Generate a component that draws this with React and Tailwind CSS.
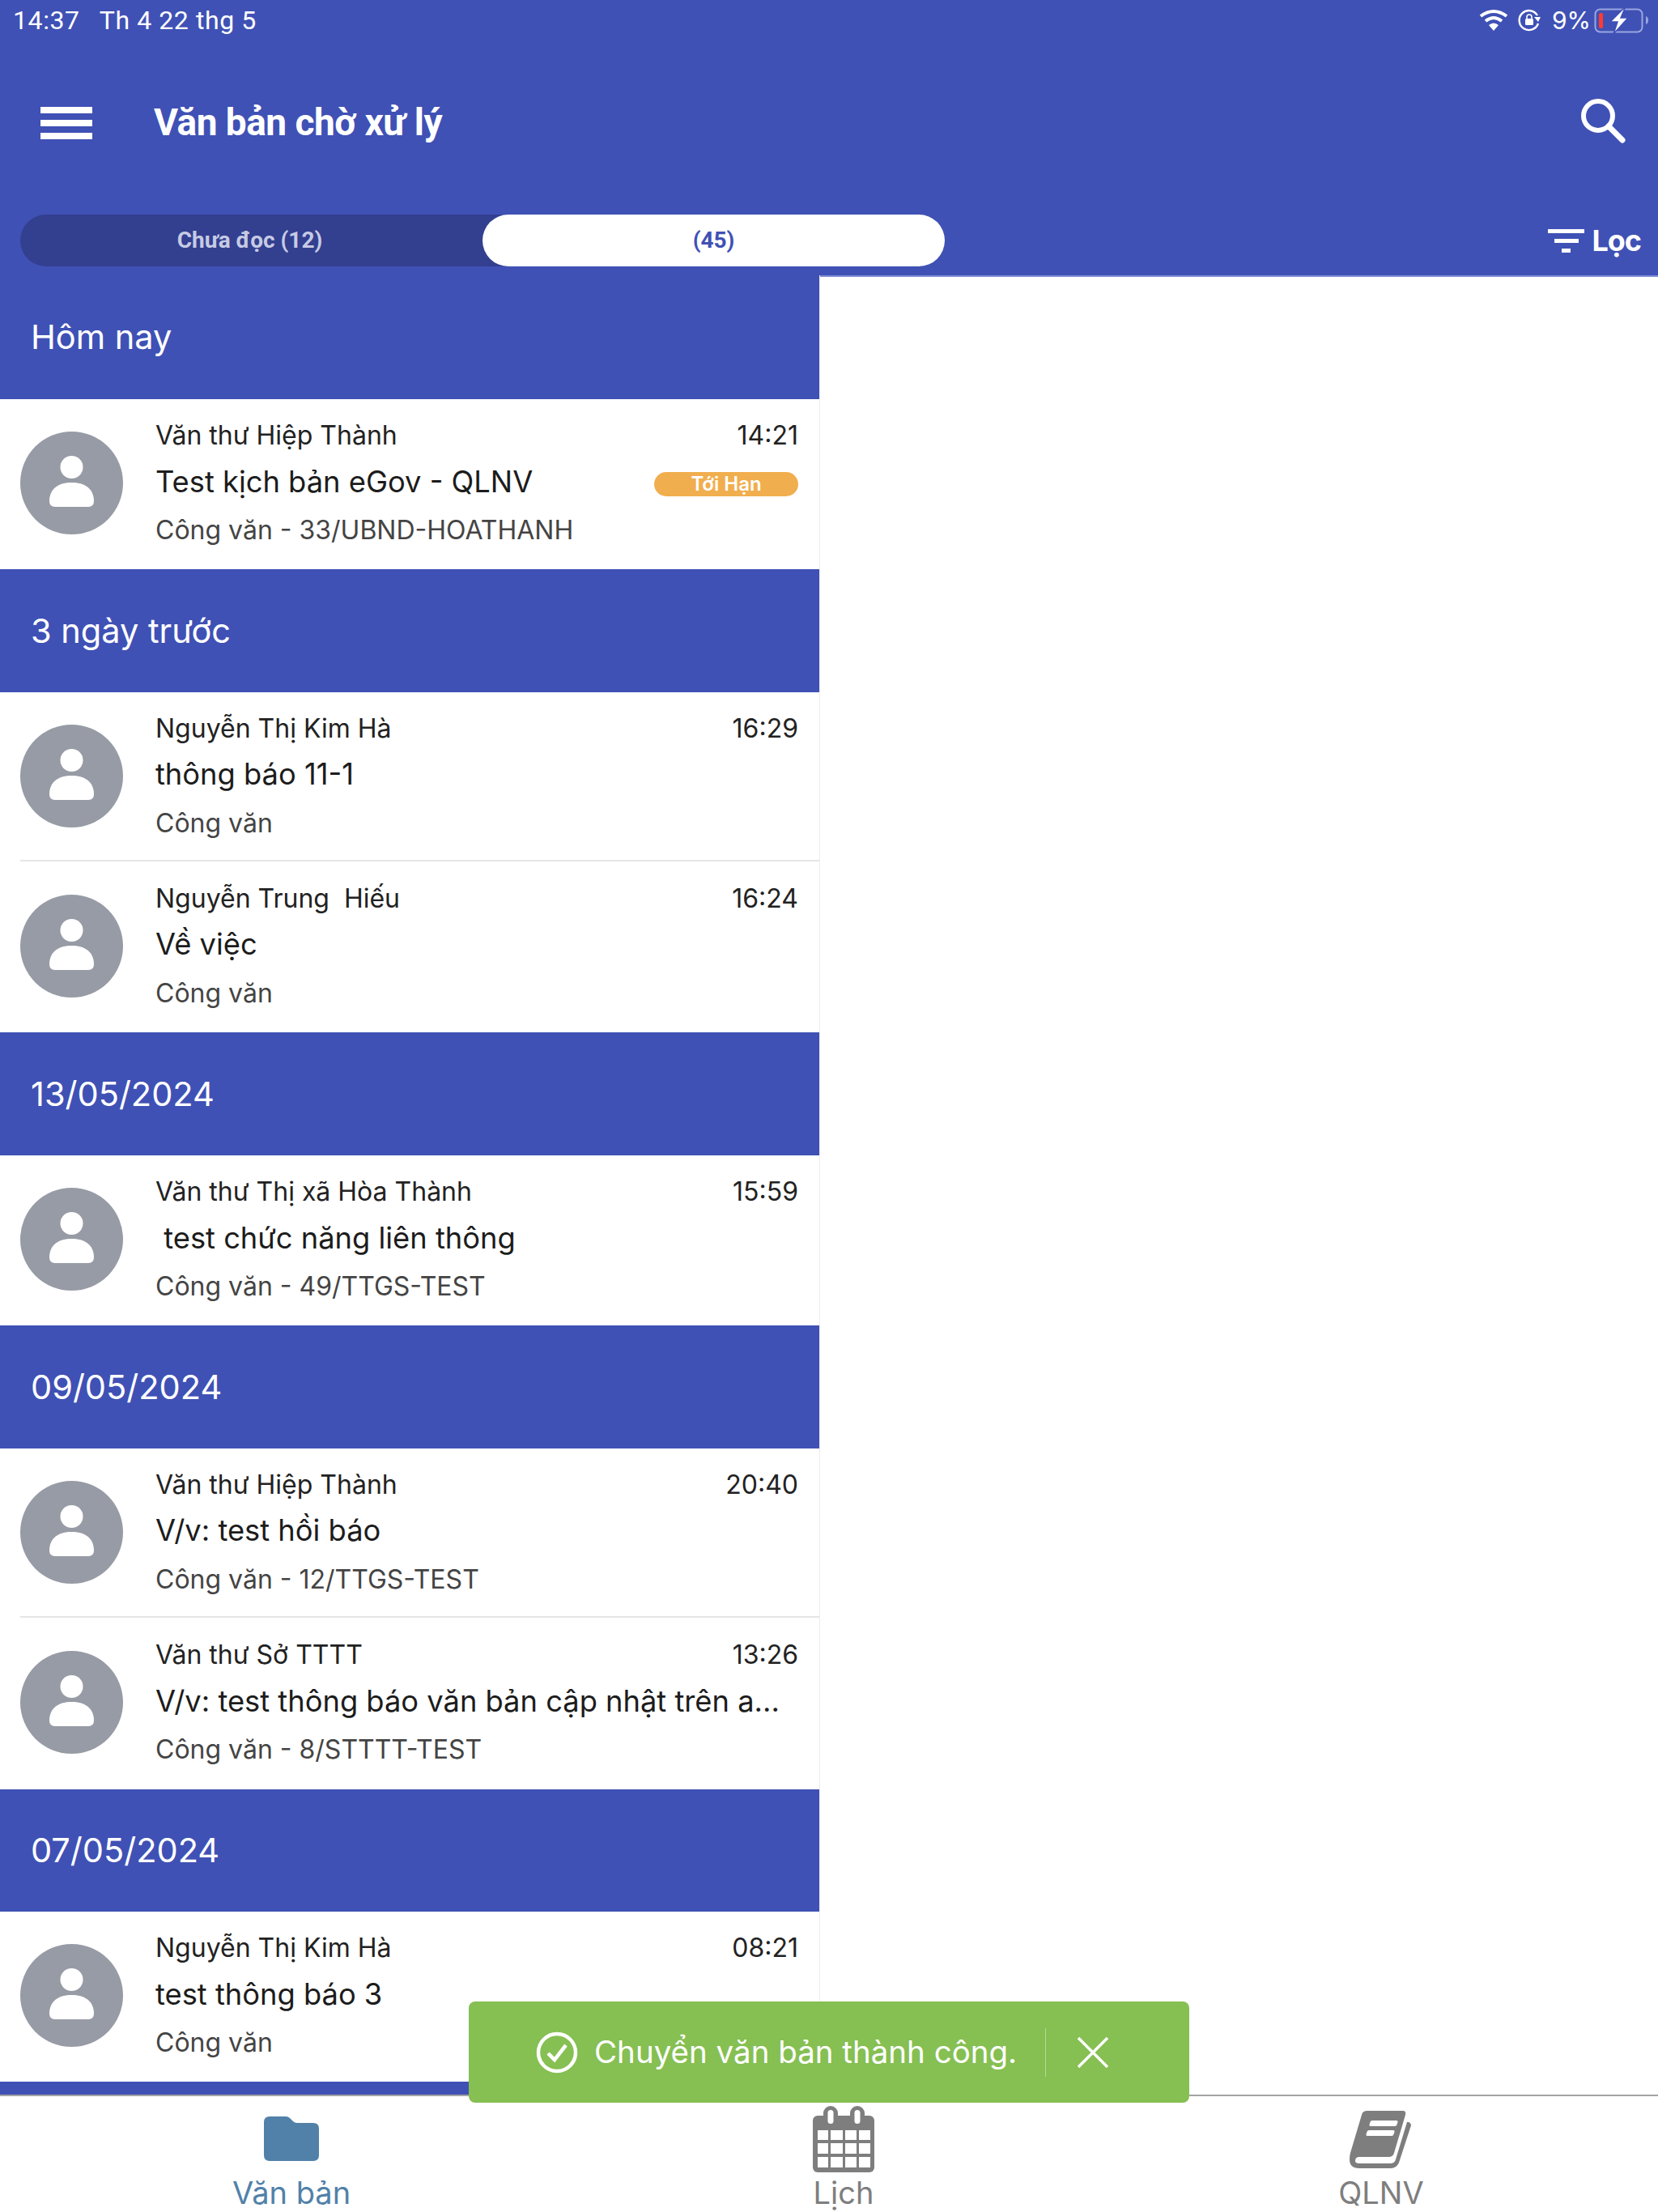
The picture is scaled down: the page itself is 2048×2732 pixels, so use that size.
const groups = [
  { title: "Hôm nay", h: "h-[153px]", items: [
    { name: "Văn thư Hiệp Thành", time: "14:21", title: "Test kịch bản eGov - QLNV", sub: "Công văn - 33/UBND-HOATHANH", badge: true, h: "h-[210px]" },
  ]},
  { title: "3 ngày trước", h: "h-[152px]", items: [
    { name: "Nguyễn Thị Kim Hà", time: "16:29", title: "thông báo 11-1", sub: "Công văn", h: "h-[209px]", line: true },
    { name: "Nguyễn Trung  Hiếu", time: "16:24", title: "Về việc", sub: "Công văn", h: "h-[211px]" },
  ]},
  { title: "13/05/2024", h: "h-[152px]", items: [
    { name: "Văn thư Thị xã Hòa Thành", time: "15:59", title: " test chức năng liên thông", sub: "Công văn - 49/TTGS-TEST", h: "h-[210px]" },
  ]},
  { title: "09/05/2024", h: "h-[152px]", items: [
    { name: "Văn thư Hiệp Thành", time: "20:40", title: "V/v: test hồi báo", sub: "Công văn - 12/TTGS-TEST", h: "h-[209px]", line: true },
    { name: "Văn thư Sở TTTT", time: "13:26", title: "V/v: test thông báo văn bản cập nhật trên a...", sub: "Công văn - 8/STTTT-TEST", h: "h-[212px]" },
  ]},
  { title: "07/05/2024", h: "h-[151px]", items: [
    { name: "Nguyễn Thị Kim Hà", time: "08:21", title: "test thông báo 3", sub: "Công văn", h: "h-[210px]" },
  ]},
];

function Avatar() {
  return (
    <svg width="127" height="127" viewBox="0 0 127 127" className="shrink-0 mt-[-3px]">
      <circle cx="63.5" cy="63.5" r="63.5" fill="#979ba5" />
      <circle cx="63.5" cy="44" r="14" fill="#fff" />
      <path d="M36 86 C36 70 48 63 63.5 63 C79 63 91 70 91 86 Q91 93 84 93 L43 93 Q36 93 36 86 Z" fill="#fff" />
    </svg>
  );
}

function Row({ it }) {
  return (
    <div className={`${it.h} relative flex items-center pl-[25px] pr-[26px] bg-white`}>
      <Avatar />
      <div className="flex-1 min-w-0 ml-[40px] flex flex-col font-['Inter',sans-serif]">
        <div className="flex justify-between items-center h-[40px] text-[32px] text-[#222]">
          <span className="whitespace-pre">{it.name}</span>
          <span>{it.time}</span>
        </div>
        <div className="flex justify-between items-center h-[74px] mb-[3px] text-[36.3px] text-[#1c1c1c]">
          <span className="whitespace-pre">{it.title}</span>
          {it.badge && (
            <span className="w-[178px] h-[30px] mt-[6px] rounded-full bg-[#f1ae4e] text-white text-[24px] font-semibold flex items-center justify-center">Tới Hạn</span>
          )}
        </div>
        <div className="h-[40px] mb-[3px] flex items-center text-[32px] text-[#444]">{it.sub}</div>
      </div>
      {it.line && <div className="absolute left-[25px] right-0 bottom-0 h-[2px] bg-[#e5e5e5]" />}
    </div>
  );
}

function Wifi() {
  return (
    <svg width="36" height="28" viewBox="0 0 36 28" fill="none" stroke="#fff" strokeWidth="4">
      <path d="M2 9 Q18 -3 34 9" />
      <path d="M8 15 Q18 7 28 15" />
      <path d="M18 27 L12 20 Q18 15 24 20 Z" fill="#fff" stroke="none" />
    </svg>
  );
}

function RotLock() {
  return (
    <svg width="28" height="28" viewBox="0 0 28 28" fill="none">
      <path d="M25 18 A12 12 0 1 1 24 8" stroke="#fff" strokeWidth="2.4" />
      <path d="M20 10 L28 10 L25 16 Z" fill="#fff" />
      <rect x="9" y="12" width="10" height="8" rx="1.5" fill="#fff" />
      <path d="M11 12 V10 A3 3 0 0 1 17 10 V12" stroke="#fff" strokeWidth="1.6" />
    </svg>
  );
}

function Battery() {
  return (
    <svg width="68" height="34" viewBox="0 0 68 34" fill="none">
      <rect x="1.5" y="3.5" width="58" height="28" rx="6" stroke="#9aa6df" strokeWidth="2" />
      <rect x="6" y="8" width="5" height="19" rx="2" fill="#ff3b30" />
      <path d="M64 12 Q67 13 67 17 Q67 21 64 22 Z" fill="#9aa6df" />
      <path d="M39 0 L20 19 L29 19 L24 34 L42 14 L33 14 Z" fill="#fff" stroke="#3f51b5" strokeWidth="1.5" />
    </svg>
  );
}

function Folder() {
  return (
    <svg width="68" height="55" viewBox="0 0 68 55">
      <path d="M7 0 H27 Q30 0 32 2 L36 6 Q38 8 41 8 H61 Q68 8 68 15 V48 Q68 55 61 55 H7 Q0 55 0 48 V7 Q0 0 7 0 Z" fill="#5181a9" />
    </svg>
  );
}

function Calendar() {
  return (
    <svg width="76" height="82" viewBox="0 0 76 82">
      <rect x="0" y="12" width="76" height="70" rx="6" fill="#7e7e7e" />
      <rect x="13" y="0" width="18" height="24" rx="9" fill="#7e7e7e" />
      <rect x="46" y="0" width="18" height="24" rx="9" fill="#7e7e7e" />
      <rect x="18.5" y="5" width="7" height="17" rx="3.5" fill="#fff" />
      <rect x="51.5" y="5" width="7" height="17" rx="3.5" fill="#fff" />
      {[[30, 12], [46, 13], [63, 13]].map(([y, h]) =>
        [[6, 13], [22, 15], [40, 14], [57, 14]].map(([x, w]) => <rect key={`${x}-${y}`} x={x} y={y} width={w} height={h} fill="#fff" />)
      )}
    </svg>
  );
}

function Book() {
  return (
    <svg width="78" height="72" viewBox="0 0 78 72">
      <path d="M22 0 H66 Q70 0 69 5 L55 52 Q54 57 48 57 H12 Q7 57 7 62 Q7 65 12 65 H50 Q56 65 57 60 L71 14 Q74 13 76 17 Q76 19 75 21 L61 64 Q58 71 51 71 H12 Q0 71 0 60 Q0 56 1 52 L15 5 Q16 0 22 0 Z" fill="#7e7e7e" />
      <path d="M28 12 H58 Q60 12 59.5 14 L58.5 17 Q58 19 56 19 H26 Q24 19 24.5 17 L25.5 14 Q26 12 28 12 Z" fill="#fff" />
      <path d="M24 24 H54 Q56 24 55.5 26 L54.5 29 Q54 31 52 31 H22 Q20 31 20.5 29 L21.5 26 Q22 24 24 24 Z" fill="#fff" />
    </svg>
  );
}

export default function App() {
  return (
    <div className="relative w-[2048px] h-[2732px] flex flex-col overflow-hidden bg-white font-['Roboto',sans-serif]">
      <div className="h-[340px] shrink-0 bg-[#3f51b5] text-white flex flex-col">
        <div className="h-[50px] flex items-center justify-between pl-[16px] pr-[11px] text-[32px] tracking-[0.6px]">
          <div className="flex gap-[24px]">
            <span>14:37</span>
            <span>Th 4 22 thg 5</span>
          </div>
          <div className="flex items-center gap-[12px]">
            <Wifi />
            <RotLock />
            <span className="font-['Inter',sans-serif] text-[30px] tracking-normal ml-[2px] mr-[-8px]">9%</span>
            <Battery />
          </div>
        </div>
        <div className="h-[203px] flex items-center pl-[50px] pr-[40px] justify-between">
          <div className="flex items-center">
            <div className="w-[64px] flex flex-col gap-[8px]">
              <div className="h-[8px] bg-white" />
              <div className="h-[8px] bg-white" />
              <div className="h-[8px] bg-white" />
            </div>
            <span className="ml-[76px] text-[46px] font-bold tracking-[-0.5px]">Văn bản chờ xử lý</span>
          </div>
          <svg className="mt-[-5px]" width="56" height="56" viewBox="0 0 56 56" fill="none" stroke="#fff" strokeLinecap="round">
            <circle cx="22" cy="22" r="18" strokeWidth="6" />
            <path d="M35 35 L52 52" strokeWidth="7" />
          </svg>
        </div>
        <div className="flex items-center justify-between pl-[25px] pr-[21px] mt-[12px]">
          <div className="w-[1142px] h-[64px] rounded-full bg-[#333f8f] flex text-[28px] font-bold">
            <div className="w-[571px] flex items-center justify-center text-[#c6cbe4] pr-[4px]">Chưa đọc (12)</div>
            <div className="w-[571px] rounded-full bg-white text-[#3f51b5] flex items-center justify-center">(45)</div>
          </div>
          <div className="flex items-center">
            <div className="flex flex-col items-center gap-[7px] w-[45px] mr-[9px]">
              <div className="w-[45px] h-[5px] bg-white" />
              <div className="w-[30px] h-[5px] bg-white" />
              <div className="w-[11px] h-[5px] bg-white" />
            </div>
            <span className="text-[36px] font-bold font-['Inter',sans-serif] tracking-[-1px]">Lọc</span>
          </div>
        </div>
      </div>

      <div className="flex-1 min-h-0 flex">
        <div className="w-[1013px] shrink-0 overflow-hidden border-r border-[#ececec]">
          {groups.map((g) => (
            <div key={g.title}>
              <div className={`${g.h} bg-[#3f51b5] text-white text-[41.5px] font-['Inter',sans-serif] flex items-center pl-[38px]`}>{g.title}</div>
              {g.items.map((it) => <Row key={it.title} it={it} />)}
            </div>
          ))}
          <div className="h-[20px] bg-[#3f51b5]" />
        </div>
        <div className="flex-1 border-t-2 border-[#7f8cd3]" />
      </div>

      <div className="h-[145px] shrink-0 grid grid-cols-[720px_644px_684px] bg-white border-t-2 border-[#a3a3a3] font-['Inter',sans-serif]">
        <div className="flex flex-col items-center text-[#5181a9]">
          <div className="h-[97px] pt-[25px]"><Folder /></div>
          <span className="text-[38px] leading-[44px]">Văn bản</span>
        </div>
        <div className="flex flex-col items-center text-[#7e7e7e]">
          <div className="h-[97px] pt-[12px]"><Calendar /></div>
          <span className="text-[38px] leading-[44px]">Lịch</span>
        </div>
        <div className="flex flex-col items-center text-[#7e7e7e]">
          <div className="h-[97px] pt-[18px]"><Book /></div>
          <span className="text-[38px] leading-[44px]">QLNV</span>
        </div>
      </div>

      <div className="absolute left-[579px] top-[2472px] w-[890px] h-[125px] rounded-[8px] bg-[#86bf52] text-white flex items-center pl-[83px] font-['Inter',sans-serif]">
        <svg width="52" height="52" viewBox="0 0 52 52" fill="none" stroke="#fff" strokeWidth="4.5">
          <circle cx="26" cy="26" r="23" />
          <path d="M15 27 L23 35 L37 17" />
        </svg>
        <span className="ml-[20px] text-[38.5px]">Chuyển văn bản thành công.</span>
        <div className="ml-[35px] w-[1px] h-[60px] bg-[#b9da9a]" />
        <svg className="ml-[38px]" width="40" height="40" viewBox="0 0 40 40" stroke="#fff" strokeWidth="3.5">
          <path d="M2 2 L38 38 M38 2 L2 38" />
        </svg>
      </div>
    </div>
  );
}
